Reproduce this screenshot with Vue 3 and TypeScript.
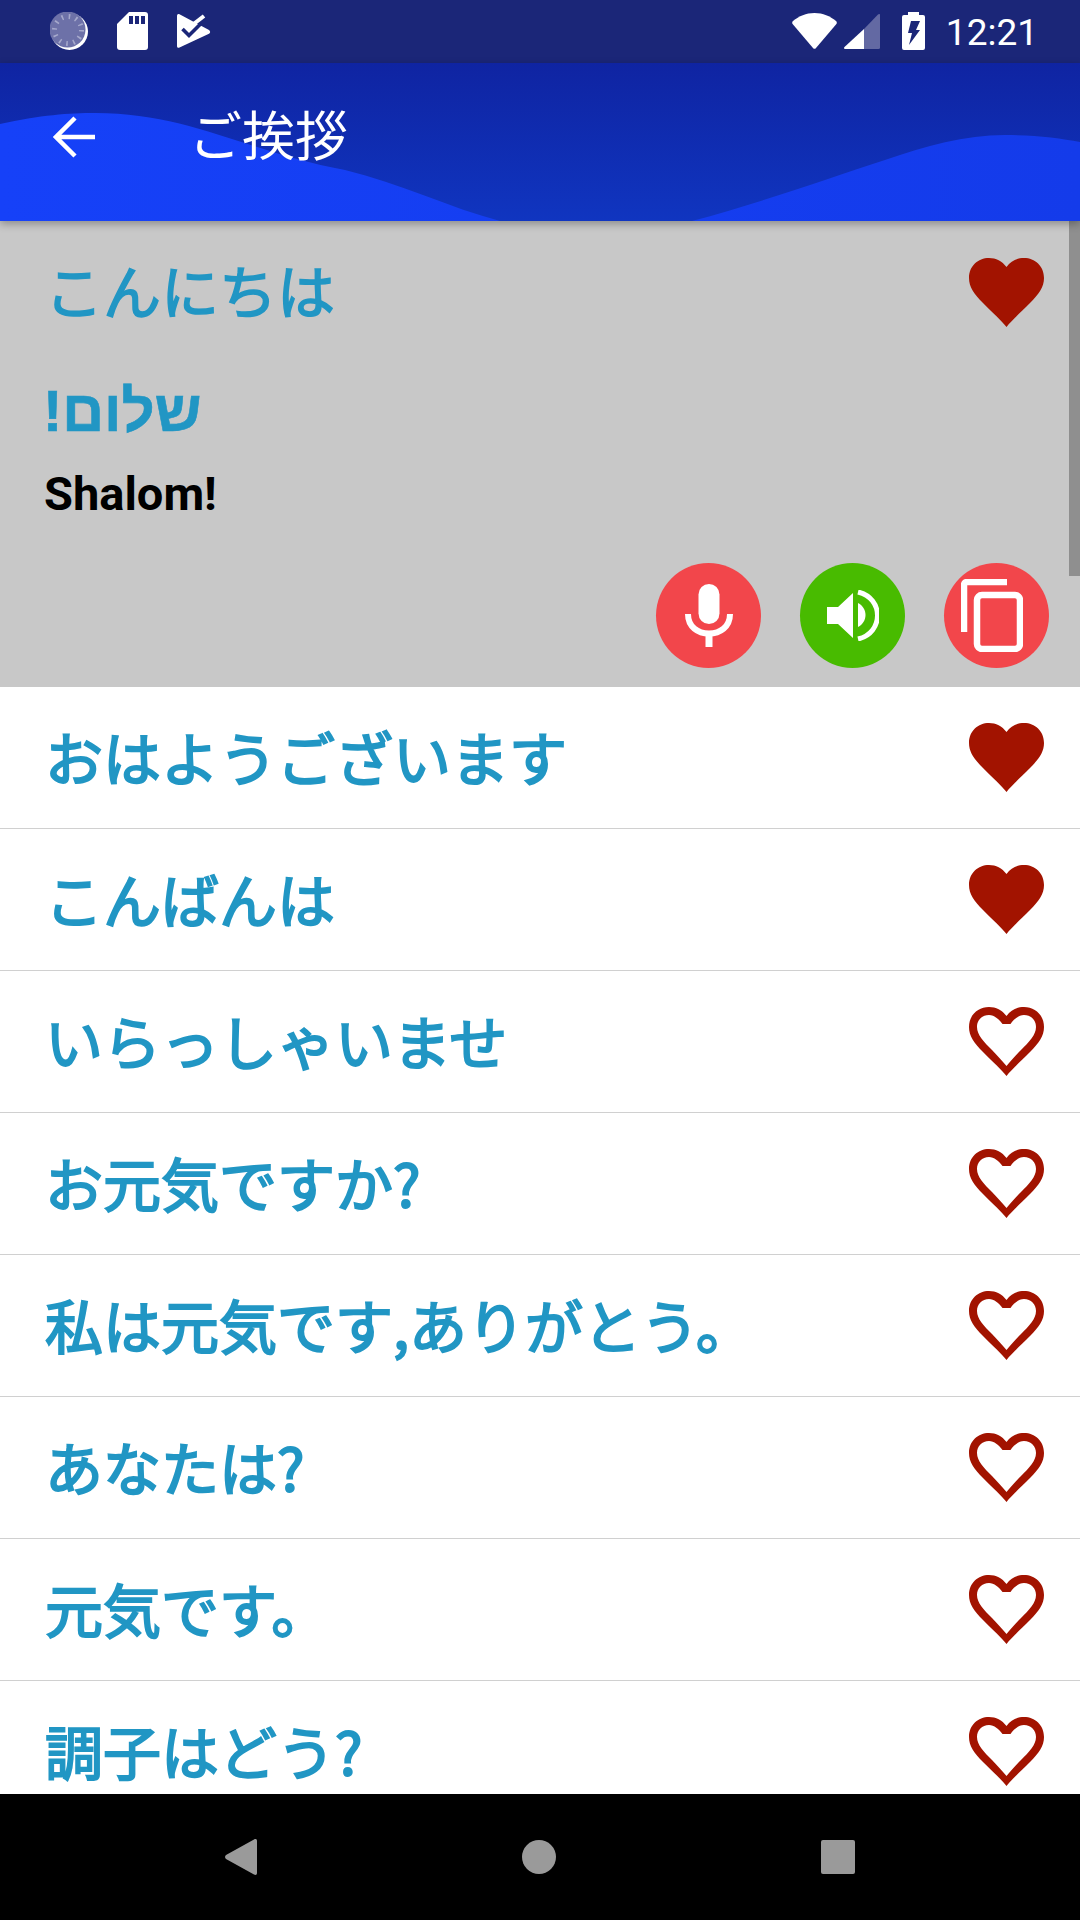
<template>
  <div class="phone">
    <!-- status bar -->
    <div class="status-bar">
      <div class="status-left">
        <svg class="ic-sync" width="38" height="38" viewBox="0 0 38 38">
          <circle cx="19.5" cy="19.5" r="18.5" fill="#fff" />
          <circle cx="17.5" cy="17.5" r="18" fill="#6d71a8" />
          <circle cx="18" cy="18" r="13.5" fill="none" stroke="#a6a9cc" stroke-width="5" stroke-dasharray="1.6 5.5" />
        </svg>
        <svg width="31" height="38" viewBox="0 0 31 38">
          <path d="M12 0H28a3 3 0 0 1 3 3V35a3 3 0 0 1-3 3H3a3 3 0 0 1-3-3V12Z" fill="#fff" />
          <path d="M12 4h4v8h-4ZM18 4h4v8h-4ZM24 4h4v8h-4Z" fill="#1b2678" />
        </svg>
        <svg width="34" height="34" viewBox="0 0 34 34">
          <path d="M0 2C0 .5 1 -.5 2.500 .3L32 16c1.500 1 1.500 3 0 3.800L2.500 33.500C1 34.300 0 33.500 0 32Z" fill="#fff" />
          <path d="M14 12 27 2" fill="none" stroke="#fff" stroke-width="4" />
          <path d="M5.500 15 12 21.500 24 9.500" fill="none" stroke="#1b2678" stroke-width="3.600" />
        </svg>
      </div>
      <div class="status-right">
        <svg width="45" height="36" viewBox="0 0 45 36">
          <path d="M1 8C7 3 14 0 22.500 0S38 3 44 8c1 1 1 2 .4 3L24 35a2 2 0 0 1-3 0L.6 11C0 10 0 9 1 8Z" fill="#fff" />
        </svg>
        <svg class="ic-signal" width="36" height="36" viewBox="0 0 36 36">
          <path d="M20 16 34 1.500C35 .5 36 1 36 2V34.500A1.500 1.500 0 0 1 34.500 36H20Z" fill="#6369a3" />
          <path d="M20 16V36H1.500C0 36-.5 35 .5 34Z" fill="#fff" />
        </svg>
        <svg class="ic-battery" width="23" height="38" viewBox="0 0 23 38">
          <path d="M6 0h11v3h4a2 2 0 0 1 2 2V36a2 2 0 0 1-2 2H2a2 2 0 0 1-2-2V5a2 2 0 0 1 2-2h4Z" fill="#fff" />
          <path d="M9 9h9l-4 9h4L7 33l3-12H6Z" fill="#1b2678" />
        </svg>
        <span class="clock">12:21</span>
      </div>
    </div>

    <!-- toolbar with wave -->
    <div class="toolbar">
      <svg class="wave" width="1080" height="158" viewBox="0 0 1080 158" preserveAspectRatio="none">
        <path d="M0 61C40 52 70 50 95 50C190 50 250 90 345 107C400 120 450 145 500 158H692C760 140 830 115 885 97C925 83 965 72 1005 72C1035 72 1060 75 1080 79V158H0Z" fill="url(#waveFill)" />
        <defs>
          <linearGradient id="waveFill" x1="0" y1="0" x2="1" y2="0">
            <stop offset="0" stop-color="#1641f8" />
            <stop offset="1" stop-color="#143bea" />
          </linearGradient>
        </defs>
      </svg>
      <button class="back-btn">
        <svg width="42" height="42" viewBox="0 0 42 42">
          <path d="M42 21H4M22 2 3 21l19 19" fill="none" stroke="#fff" stroke-width="4.500" />
        </svg>
      </button>
      <span class="title">ご挨拶</span>
    </div>

    <!-- phrase list -->
    <div class="list">
      <div class="scrollbar"></div>

      <div class="expanded">
        <div class="row-head">
          <span class="phrase first">こんにちは</span>
          <svg class="heart" width="75" height="69" viewBox="0 0 75 69">
            <path :d="heartPath" fill="#a21300" />
          </svg>
        </div>
        <div class="hebrew" dir="rtl">שלום!</div>
        <div class="latin">Shalom!</div>
        <div class="actions">
          <div class="fab red">
            <svg width="48" height="64" viewBox="0 0 48 64">
              <rect x="13.500" y="0" width="21" height="40" rx="10.500" fill="#fff" />
              <path d="M3 30C3 43 13 49.500 24 49.500S45 43 45 30" fill="none" stroke="#fff" stroke-width="6" />
              <path d="M24 50V63" stroke="#fff" stroke-width="7" />
            </svg>
          </div>
          <div class="fab green">
            <svg width="52" height="51" viewBox="0 0 52 51">
              <path d="M0 17H11L26 3V48L11 34H0Z" fill="#fff" />
              <path d="M31 13C41 18 41 32 31 37Z" fill="#fff" />
              <path d="M31 2C57 8 57 43 31 49" fill="none" stroke="#fff" stroke-width="5" />
            </svg>
          </div>
          <div class="fab red">
            <svg class="ic-copy" width="62" height="73" viewBox="0 0 62 73">
              <path d="M46 3H6a3 3 0 0 0-3 3V53" fill="none" stroke="#fff" stroke-width="6.500" />
              <rect x="16" y="16" width="43" height="54" rx="5" fill="none" stroke="#fff" stroke-width="6.500" />
            </svg>
          </div>
        </div>
      </div>

      <div v-for="item in phrases" :key="item.text" class="row">
        <span class="phrase">{{ item.text }}</span>
        <svg class="heart" width="75" height="69" viewBox="0 0 75 69">
          <path v-if="item.fav" :d="heartPath" fill="#a21300" />
          <path v-else :d="heartPath + heartHole" fill="#a21300" fill-rule="evenodd" />
        </svg>
      </div>
    </div>

    <!-- nav bar -->
    <div class="nav-bar">
      <svg width="32" height="36" viewBox="0 0 32 36">
        <path d="M29 .5C30.500-.5 32 0 32 2V34c0 2-1.500 2.500-3 1.500L1 20c-1.300-1-1.300-3 0-4Z" fill="#9a9a9a" />
      </svg>
      <div class="nav-circle"></div>
      <div class="nav-square"></div>
    </div>
  </div>
</template>

<script setup lang="ts">
interface Phrase {
  text: string
  fav: boolean
}

const heartPath = 'M37.500 69C33 63 24 55 14 45 5 36 0 29 0 20 0 8 9 0 20 0 27 0 33 3 37.500 9 42 3 48 0 55 0 66 0 75 8 75 20 75 29 70 36 61 45 51 55 42 63 37.500 69Z'
// inner cut-out for the empty heart, flat under the notch
const heartHole = 'M41.500 17C45 12 50 8 55 8 62 8 67 13 67 20 67 28 60 35 52 43 47 48 42 54 37.500 59 33 54 28 48 23 43 15 35 8 28 8 20 8 13 13 8 20 8 25 8 30 12 33.500 17Z'

const phrases: Phrase[] = [
  { text: 'おはようございます', fav: true },
  { text: 'こんばんは', fav: true },
  { text: 'いらっしゃいませ', fav: false },
  { text: 'お元気ですか?', fav: false },
  { text: '私は元気です,ありがとう。', fav: false },
  { text: 'あなたは?', fav: false },
  { text: '元気です。', fav: false },
  { text: '調子はどう?', fav: false }
]
</script>

<style>
html, body {
  margin: 0;
  padding: 0;
  background: #fff;
}
</style>

<style scoped>
.phone {
  width: 1080px;
  height: 1920px;
  display: flex;
  flex-direction: column;
  overflow: hidden;
  font-family: "Noto Sans CJK JP", "Noto Sans", sans-serif;
}

.status-bar {
  height: 63px;
  flex-shrink: 0;
  background: #1b2678;
  display: flex;
  align-items: center;
  justify-content: space-between;
  padding: 0 42px 1px 50px;
  box-sizing: border-box;
}

.status-left {
  display: flex;
  align-items: center;
  gap: 29px;
}

.status-right {
  display: flex;
  align-items: center;
}

.ic-signal {
  margin-left: 7px;
}

.ic-battery {
  margin-left: 22px;
}

.clock {
  margin: 3px 0 0 21px;
  color: #fff;
  font-family: Roboto, sans-serif;
  font-size: 37px;
  line-height: 44px;
}

.toolbar {
  position: relative;
  z-index: 2;
  height: 158px;
  flex-shrink: 0;
  display: flex;
  align-items: center;
  padding: 0 0 10px 53px;
  box-sizing: border-box;
  background: linear-gradient(180deg, #0f24a2 0%, #1035c0 100%);
  box-shadow: 0 3px 8px rgba(0, 0, 0, 0.3);
}

.wave {
  position: absolute;
  left: 0;
  top: 0;
}

.back-btn {
  position: relative;
  padding: 0;
  border: none;
  background: none;
  display: flex;
}

.title {
  position: relative;
  margin: -8px 0 0 94px;
  color: #fff;
  font-size: 53px;
  line-height: 60px;
}

.list {
  position: relative;
  flex: 1;
  overflow: hidden;
}

.scrollbar {
  position: absolute;
  top: 0;
  right: 0;
  width: 11px;
  height: 355px;
  background: #8f8f8f;
}

.expanded {
  height: 466px;
  background: #c8c8c8;
  padding-right: 31px;
  box-sizing: border-box;
}

.row-head,
.row {
  display: flex;
  align-items: center;
  justify-content: space-between;
  height: 142px;
  padding: 0 36px 0 45px;
  box-sizing: border-box;
}

.row-head {
  padding-right: 5px;
}

.row {
  border-bottom: 1px solid #d0d0d0;
}

.phrase {
  margin-top: -4px;
  color: #2196c4;
  font-size: 58px;
  -webkit-text-stroke: 2px #2196c4;
  white-space: nowrap;
}

.phrase.first {
  margin-top: -7px;
  -webkit-text-stroke-width: 1.6px;
}

.heart {
  flex-shrink: 0;
}

.hebrew {
  width: fit-content;
  margin: 14px 0 0 43px;
  color: #2196c4;
  font-family: "Liberation Sans", sans-serif;
  font-size: 58px;
  font-weight: 700;
  -webkit-text-stroke: 0.6px #2196c4;
  line-height: 68px;
}

.latin {
  margin: 22px 0 0 44px;
  color: #000;
  font-family: Roboto, sans-serif;
  font-size: 47px;
  font-weight: 700;
  line-height: 54px;
}

.actions {
  display: flex;
  justify-content: flex-end;
  gap: 39px;
  margin-top: 42px;
}

.fab {
  width: 105px;
  height: 105px;
  border-radius: 50%;
  display: flex;
  align-items: center;
  justify-content: center;
}

.fab.red {
  background: #f2464b;
}

.fab.green {
  background: #48bb00;
}

.ic-copy {
  margin-right: 9px;
}

.nav-bar {
  height: 126px;
  flex-shrink: 0;
  background: #000;
  display: flex;
  align-items: center;
  justify-content: space-between;
  padding: 0 225px;
  box-sizing: border-box;
}

.nav-circle {
  width: 34px;
  height: 34px;
  border-radius: 50%;
  background: #9a9a9a;
}

.nav-square {
  width: 34px;
  height: 34px;
  border-radius: 2px;
  background: #9a9a9a;
}
</style>
